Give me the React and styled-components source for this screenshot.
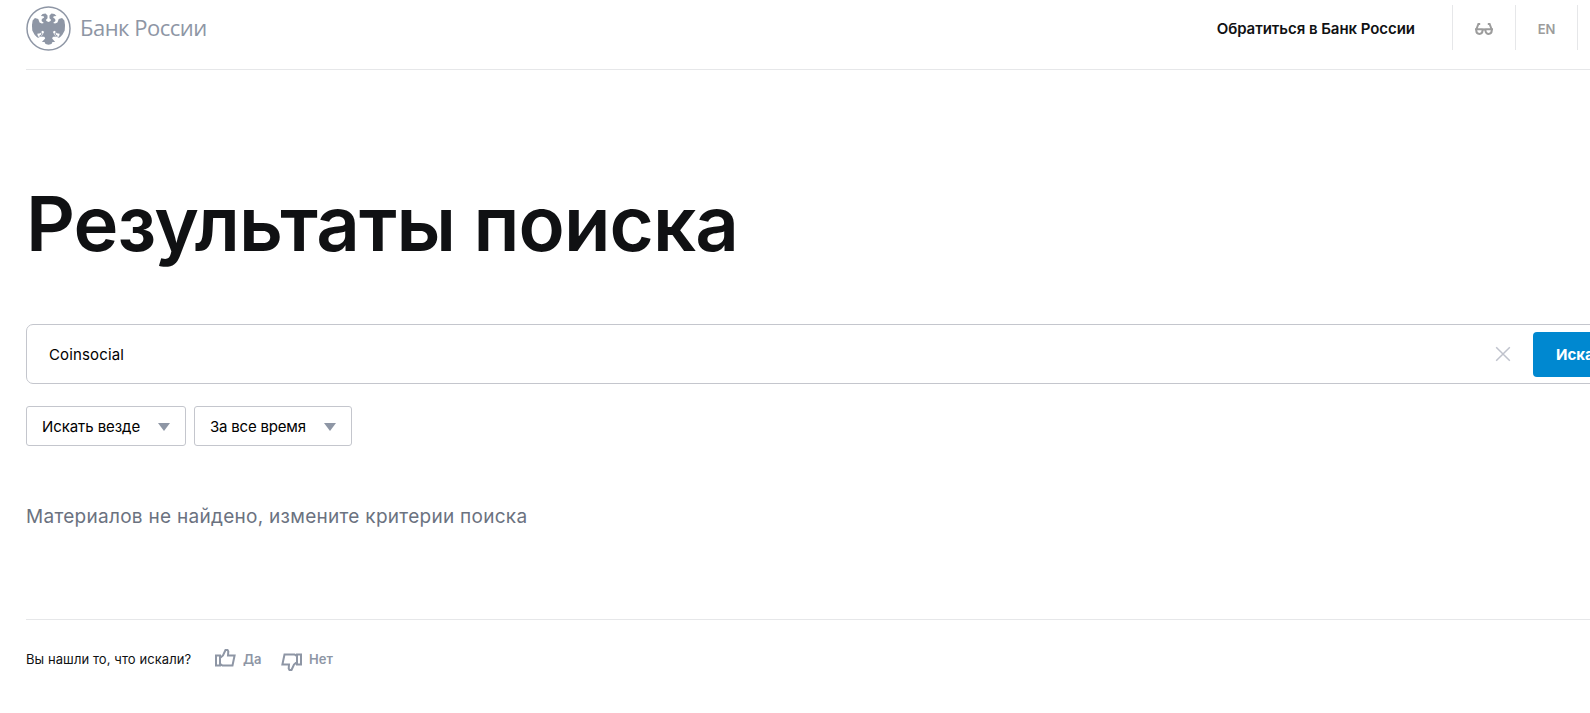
import React, { Component } from "react";
import styled, { createGlobalStyle } from "styled-components";

export default class App extends Component {
  render() {
    return (
      <Page>
        <GlobalStyle />
        <Header>
          <Logo href="#">
            <Emblem />
            <LogoText>Банк России</LogoText>
          </Logo>
          <HeaderNav>
            <ContactLink href="#">Обратиться в Банк России</ContactLink>
            <HeaderCell $width={63}>
              <Glasses />
            </HeaderCell>
            <HeaderCell $width={62}>EN</HeaderCell>
            <HeaderCell $width={62} />
          </HeaderNav>
        </Header>
        <Title>Результаты поиска</Title>
        <SearchBox>
          <SearchInput defaultValue="Coinsocial" />
          <ClearIcon viewBox="0 0 16 16">
            <path d="M1.200 1.200l13.600 13.600M14.800 1.200l-13.600 13.600" />
          </ClearIcon>
          <SearchButton>Искать</SearchButton>
        </SearchBox>
        <Filters>
          <Filter $width={160} $spacing="-0.08">
            Искать везде
            <Arrow />
          </Filter>
          <Filter $width={158} $spacing="-0.2">
            За все время
            <Arrow />
          </Filter>
        </Filters>
        <Message>Материалов не найдено, измените критерии поиска</Message>
        <Feedback>
          <Question>Вы нашли то, что искали?</Question>
          <Vote $width={66}>
            <Thumb />
            Да
          </Vote>
          <Vote $width={60}>
            <Thumb down />
            Нет
          </Vote>
        </Feedback>
      </Page>
    );
  }
}

function Emblem() {
  return (
    <EmblemSvg viewBox="17 17 136 136">
      <circle cx="85" cy="85" r="65" fill="none" stroke="#8e96a5" strokeWidth="4.5" />
      <path
        fill="#8e96a5"
        d="M62 47L67 41L76 40L82 46V54L77 59L80 63L85 65L90 63L93 59L88 54V46L94 40L103 41L109 47L101 48L99 52L105 56L106 62L99 68L105 70L112 67L116 56L126 53L133 61L135 75L134 91L127 104L119 112L112 113L117 108L119 101L110 99L104 92L98 95L105 108L98 111L96 115L105 126L97 126L94 132L85 134L76 132L73 126L65 126L75 115L73 111L65 108L72 95L66 92L60 99L51 101L53 108L58 113L51 112L43 104L36 91L35 75L37 61L44 53L54 56L58 67L65 70L71 68L64 62L65 56L72 52L70 48Z"
      />
      <path
        d="M59 92L66 102L58 108L70 108M111 92L104 102L112 108L100 108"
        fill="none"
        stroke="#8e96a5"
        strokeWidth="3"
      />
    </EmblemSvg>
  );
}

function Glasses() {
  return (
    <GlassesSvg viewBox="0 0 18 12">
      <path d="M5.200 1H3.400L1.500 6M12.800 1h1.800L16.500 6M0 6.200H7.800M10.200 6.200H18M7.500 7Q9 5.600 10.500 7" />
      <path d="M1.300 6v1.800A3 3 0 0 0 7.500 7.800V6M10.500 6v1.800A3 3 0 0 0 16.700 7.800V6" />
    </GlassesSvg>
  );
}

function Thumb({ down }) {
  return (
    <ThumbSvg viewBox="0 0 21 18" $down={down}>
      <path d="M1 6.500H5V16.500H1ZM5 14.800L7.500 16.500H17.500L19.600 6.500H13L13.300 2.500L12.500 1H10.500L8 6.500L5 9" />
    </ThumbSvg>
  );
}

const GlobalStyle = createGlobalStyle`
  * {
    box-sizing: border-box;
  }
  body {
    margin: 0;
    overflow: hidden;
    background: #fff;
    font-family: Inter, "Noto Sans", sans-serif;
    color: #101113;
  }
`;

const Page = styled.main`
  width: 1664px;
  height: 713px;
  padding-left: 26px;
  display: flex;
  flex-direction: column;
`;

const Header = styled.header`
  flex: none;
  height: 70px;
  padding: 5px 25px 0 0;
  display: flex;
  justify-content: space-between;
  align-items: flex-start;
  border-bottom: 1px solid #e6e7e9;
`;

const Logo = styled.a`
  display: flex;
  align-items: center;
  height: 46px;
  color: #8e96a5;
  text-decoration: none;
`;

const EmblemSvg = styled.svg`
  width: 45px;
  height: 45px;
`;

const LogoText = styled.span`
  margin-left: 9px;
  padding-bottom: 2px;
  font-family: "Open Sans", "Noto Sans", sans-serif;
  font-size: 22px;
  font-weight: 400;
  line-height: 30px;
  letter-spacing: -0.5px;
  white-space: nowrap;
`;

const HeaderNav = styled.nav`
  display: flex;
  align-items: center;
  height: 45px;
`;

const ContactLink = styled.a`
  margin-right: 37px;
  padding-top: 3px;
  font-size: 15px;
  font-weight: 600;
  line-height: 20px;
  letter-spacing: -0.05px;
  color: #101113;
  text-decoration: none;
  white-space: nowrap;
`;

const HeaderCell = styled.div`
  width: ${(props) => props.$width}px;
  height: 45px;
  padding-top: 2px;
  display: flex;
  align-items: center;
  justify-content: center;
  border-left: 1px solid #e6e7e9;
  font-size: 13px;
  font-weight: 600;
  color: #9c9c9c;
`;

const GlassesSvg = styled.svg`
  width: 18px;
  height: 12px;
  fill: none;
  stroke: #9c9c9c;
  stroke-width: 2;
`;

const Title = styled.h1`
  flex: none;
  margin: 107px 0 0;
  height: 92px;
  font-size: 76px;
  font-weight: 560;
  line-height: 92px;
  letter-spacing: -0.9px;
  white-space: nowrap;
`;

const SearchBox = styled.div`
  flex: none;
  height: 60px;
  margin-top: 55px;
  padding: 0 7px 0 22px;
  display: flex;
  align-items: center;
  border: 1px solid #c4c6cd;
  border-radius: 7px;
`;

const SearchInput = styled.input`
  flex: 1;
  height: 30px;
  padding: 0;
  border: 0;
  outline: 0;
  background: none;
  font-family: inherit;
  font-size: 15px;
  letter-spacing: 0.15px;
  color: #000;
`;

const ClearIcon = styled.svg`
  width: 16px;
  height: 16px;
  margin-right: 22px;
  fill: none;
  stroke: #bfc2cc;
  stroke-width: 1.5;
`;

const SearchButton = styled.button`
  width: 123px;
  height: 45px;
  padding: 0 0 0 23px;
  border: 0;
  border-radius: 4px;
  background: #0088d0;
  font-family: inherit;
  font-size: 15px;
  font-weight: 700;
  text-align: left;
  color: #fff;
`;

const Filters = styled.div`
  display: flex;
  gap: 8px;
  margin-top: 22px;
`;

const Filter = styled.div`
  width: ${(props) => props.$width}px;
  height: 40px;
  padding: 0 15px;
  display: flex;
  align-items: center;
  justify-content: space-between;
  border: 1px solid #c4c6cd;
  border-radius: 3px;
  font-size: 15px;
  letter-spacing: ${(props) => props.$spacing}px;
  white-space: nowrap;
  color: #000;
`;

const Arrow = styled.i`
  margin-top: 2px;
  border: 6px solid transparent;
  border-top: 8px solid #8e96a5;
  border-bottom: 0;
`;

const Message = styled.p`
  flex: none;
  height: 28px;
  margin: 57px 0 0;
  font-size: 19px;
  line-height: 28px;
  letter-spacing: 0.28px;
  color: #6b7280;
`;

const Feedback = styled.footer`
  margin-top: 88px;
  padding-top: 29px;
  display: flex;
  align-items: flex-start;
  border-top: 1px solid #e6e7e9;
  font-size: 13px;
  line-height: 20px;
`;

const Question = styled.span`
  width: 189px;
  letter-spacing: 0.08px;
  white-space: nowrap;
`;

const Vote = styled.div`
  width: ${(props) => props.$width}px;
  display: flex;
  align-items: flex-start;
  gap: 7px;
  font-weight: 600;
  color: #8e96a5;
`;

const ThumbSvg = styled.svg`
  flex: none;
  width: 21px;
  height: 18px;
  margin-top: ${(props) => (props.$down ? "4px" : "0")};
  fill: none;
  stroke: #8e96a5;
  stroke-width: 2;
  transform: ${(props) => (props.$down ? "rotate(180deg)" : "none")};
`;
